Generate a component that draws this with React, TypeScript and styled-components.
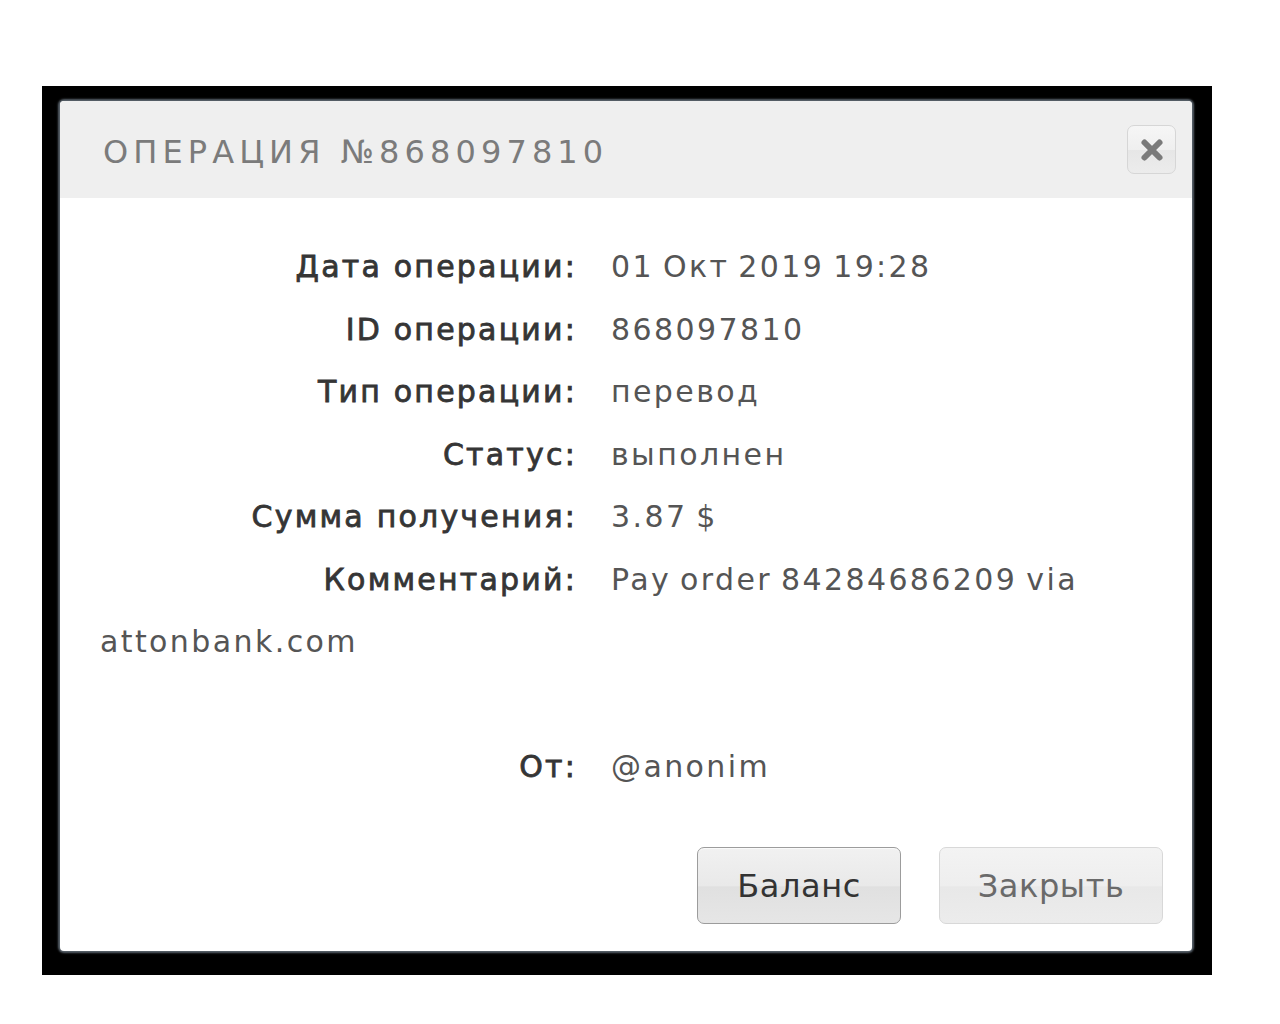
import React from 'react';
import styled, { createGlobalStyle } from 'styled-components';

const Global = createGlobalStyle`
  html, body { margin: 0; padding: 0; background: #fff; }
  body { font-family: "DejaVu Sans", "Liberation Sans", sans-serif; }
  * { box-sizing: border-box; }
`;

const Page = styled.div`
  padding: 86px 0 0 42px;
`;

const Frame = styled.div`
  width: 1170px;
  background: #000;
  padding: 15px 20px 24px 18px;
`;

const Dialog = styled.div`
  width: 1132px;
  height: 850px;
  background: #fff;
  border-radius: 4px;
  box-shadow: 0 0 2px 2px #58616a;
  overflow: hidden;
  display: flex;
  flex-direction: column;
`;

const Header = styled.div`
  height: 97px;
  flex: none;
  background: #efefef;
  display: flex;
  align-items: center;
  justify-content: space-between;
  padding: 0 16px 0 43px;
`;

const Title = styled.h1`
  margin: 4px 0 0 0;
  font-family: "DejaVu Sans", sans-serif;
  font-weight: 400;
  font-size: 32px;
  letter-spacing: 5.1px;
  color: #7b7b7b;
`;

const CloseBox = styled.button`
  width: 49px;
  height: 49px;
  padding: 0;
  border: 1px solid #d6d6d6;
  border-radius: 7px;
  background: linear-gradient(#f6f6f6 0%, #efefef 50%, #e6e6e6 50%, #ececec 100%);
  display: flex;
  align-items: center;
  justify-content: center;
  cursor: pointer;
`;

const Body = styled.div`
  flex: 1;
  padding: 38px 40px 0 40px;
  font-size: 30px;
`;

const Row = styled.div`
  line-height: 62.5px;
  min-height: 62.5px;
`;

const Label = styled.span`
  display: inline-block;
  width: 477px;
  margin-right: 34px;
  text-align: right;
  font-weight: 400;
  color: #353535;
  letter-spacing: 2.2px;
  -webkit-text-stroke: 0.8px #353535;
`;

const Value = styled.span`
  color: #555;
  letter-spacing: 2.4px;
  word-spacing: -3px;
`;

const Footer = styled.div`
  display: flex;
  justify-content: flex-end;
  gap: 38px;
  padding: 0 29px 27px 0;
`;

const Button = styled.button<{ $primary?: boolean }>`
  height: 77px;
  width: ${(p) => (p.$primary ? '204px' : '224px')};
  border-radius: 7px;
  font-family: "DejaVu Sans", sans-serif;
  font-size: 32px;
  letter-spacing: 0.6px;
  cursor: pointer;
  border: 1px solid ${(p) => (p.$primary ? '#9c9c9c' : '#d8d8d8')};
  color: ${(p) => (p.$primary ? '#333' : '#6a6a6a')};
  background: ${(p) =>
    p.$primary
      ? 'linear-gradient(#f1f1f1 0%, #e9e9e9 50%, #e0e0e0 52%, #e6e6e6 100%)'
      : 'linear-gradient(#f3f3f3 0%, #eeeeee 50%, #e8e8e8 52%, #ececec 100%)'};
  box-shadow: ${(p) => (p.$primary ? 'inset 0 1px 0 #fafafa' : 'none')};
`;

const rows: [string, string][] = [
  ['Дата операции:', '01 Окт 2019 19:28'],
  ['ID операции:', '868097810'],
  ['Тип операции:', 'перевод'],
  ['Статус:', 'выполнен'],
  ['Сумма получения:', '3.87 $'],
  ['Комментарий:', 'Pay order 84284686209 via attonbank.com'],
];

export default function App() {
  return (
    <>
      <Global />
      <Page>
        <Frame>
          <Dialog>
            <Header>
              <Title>ОПЕРАЦИЯ №868097810</Title>
              <CloseBox aria-label="close">
                <svg width="24" height="24" viewBox="0 0 24 24">
                  <path d="M4.5 4.5 L19.5 19.5 M19.5 4.5 L4.5 19.5" stroke="#7a7a7a" strokeWidth="6" strokeLinecap="round" />
                </svg>
              </CloseBox>
            </Header>
            <Body>
              {rows.map(([l, v]) => (
                <Row key={l}>
                  <Label>{l}</Label>
                  <Value>{v}</Value>
                </Row>
              ))}
              <Row />
              <Row>
                <Label>От:</Label>
                <Value>@anonim</Value>
              </Row>
            </Body>
            <Footer>
              <Button $primary>Баланс</Button>
              <Button>Закрыть</Button>
            </Footer>
          </Dialog>
        </Frame>
      </Page>
    </>
  );
}
